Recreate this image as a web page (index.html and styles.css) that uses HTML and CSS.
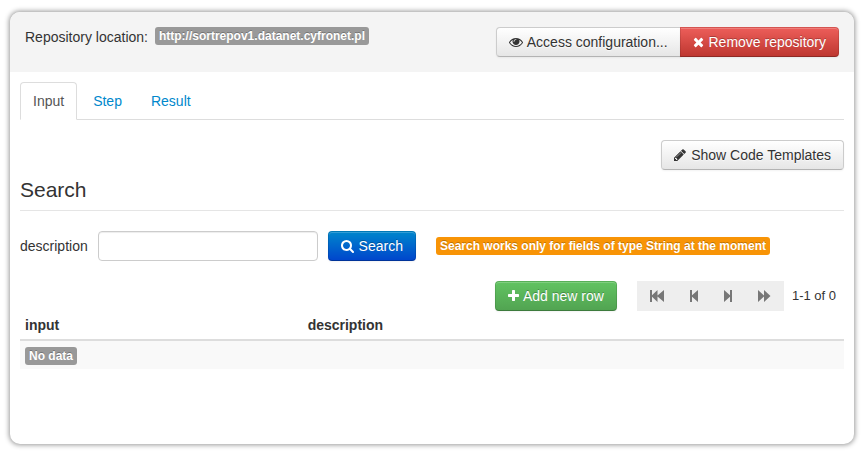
FILE: index.html
```html
<!DOCTYPE html>
<html lang="en">
<head>
<meta charset="utf-8">
<title>Repository</title>
<link rel="stylesheet" href="styles.css">
</head>
<body>
<main class="panel">
  <header class="panel-header">
    <div class="location">Repository location: <span class="label">http://sortrepov1.datanet.cyfronet.pl</span></div>
    <div class="btn-group">
      <button type="button" class="btn"><svg class="icon" width="14" height="14" viewBox="0 0 1792 1792" aria-hidden="true"><path d="M1664 960q-152-236-381-353 61 104 61 225 0 185-131.5 316.5t-316.5 131.5-316.5-131.5-131.5-316.5q0-121 61-225-229 117-381 353 133 205 333.5 326.5t434.5 121.5 434.5-121.5 333.5-326.5zm-720-384q0-20-14-34t-34-14q-125 0-214.5 89.5t-89.5 214.5q0 20 14 34t34 14 34-14 14-34q0-86 61-147t147-61q20 0 34-14t14-34zm848 384q0 34-20 69-140 230-376.5 368.5t-499.5 138.5-499.5-139-376.5-368q-20-35-20-69t20-69q140-229 376.5-368t499.5-139 499.5 139 376.5 368q20 35 20 69z"/></svg> Access configuration...</button>
      <button type="button" class="btn btn-danger"><svg class="icon" width="11" height="14" viewBox="192 0 1408 1792" aria-hidden="true"><path d="M1490 1322q0 40-28 68l-136 136q-28 28-68 28t-68-28l-294-294-294 294q-28 28-68 28t-68-28l-136-136q-28-28-28-68t28-68l294-294-294-294q-28-28-28-68t28-68l136-136q28-28 68-28t68 28l294 294 294-294q28-28 68-28t68 28l136 136q28 28 28 68t-28 68l-294 294 294 294q28 28 28 68z"/></svg> Remove repository</button>
    </div>
  </header>

  <div class="panel-body">
    <nav class="tabs">
      <a class="tab active" href="#input">Input</a>
      <a class="tab" href="#step">Step</a>
      <a class="tab" href="#result">Result</a>
    </nav>

    <div class="actions">
      <button type="button" class="btn"><svg class="icon" width="12" height="14" viewBox="128 0 1536 1792" aria-hidden="true"><path d="M491 1536l91-91-235-235-91 91v107h128v128h107zm523-928q0-22-22-22-10 0-17 7l-542 542q-7 7-7 17 0 22 22 22 10 0 17-7l542-542q7-7 7-17zm-54-192l416 416-832 832h-416v-416zm683 96q0 53-37 90l-166 166-416-416 166-165q36-38 90-38 53 0 91 38l235 234q37 39 37 91z"/></svg> Show Code Templates</button>
    </div>

    <h2 class="heading">Search</h2>

    <form class="search-form">
      <label for="description">description</label>
      <input type="text" id="description">
      <button type="button" class="btn btn-primary"><svg class="icon" width="13" height="14" viewBox="64 0 1664 1792" aria-hidden="true"><path d="M1216 832q0-185-131.5-316.5t-316.5-131.5-316.5 131.5-131.5 316.5 131.5 316.5 316.5 131.5 316.5-131.5 131.5-316.5zm512 832q0 52-38 90t-90 38q-54 0-90-38l-343-342q-179 124-399 124-143 0-273.5-55.5t-225-150-150-225-55.5-273.5 55.5-273.5 150-225 225-150 273.5-55.5 273.5 55.5 225 150 150 225 55.5 273.5q0 220-124 399l343 343q37 37 37 90z"/></svg> Search</button>
      <span class="label label-warning">Search works only for fields of type String at the moment</span>
    </form>

    <div class="toolbar">
      <button type="button" class="btn btn-success"><svg class="icon" width="11" height="14" viewBox="192 0 1408 1792" aria-hidden="true"><path d="M1600 736v192q0 40-28 68t-68 28h-416v416q0 40-28 68t-68 28h-192q-40 0-68-28t-28-68v-416h-416q-40 0-68-28t-28-68v-192q0-40 28-68t68-28h416v-416q0-40 28-68t68-28h192q40 0 68 28t28 68v416h416q40 0 68 28t28 68z"/></svg> Add new row</button>
      <div class="pager">
        <button type="button" aria-label="First page"><svg width="14" height="12" viewBox="0 0 14 12"><path d="M0 0h2v5.300L7.500 0v5.500L14 0v12L7.500 6.500V12L2 6.700V12H0z"/></svg></button>
        <button type="button" aria-label="Previous page"><svg width="8" height="12" viewBox="0 0 8 12"><path d="M0 0h2v5.300L8 0v12L2 6.700V12H0z"/></svg></button>
        <button type="button" aria-label="Next page"><svg width="8" height="12" viewBox="0 0 8 12"><path d="M8 0H6v5.300L0 0v12l6-5.300V12h2z"/></svg></button>
        <button type="button" aria-label="Last page"><svg width="13" height="12" viewBox="0 0 13 12"><path d="M0 0l6 5.500V0l6.500 6-6.500 6V6.500L0 12z"/></svg></button>
      </div>
      <span class="range">1-1 of 0</span>
    </div>

    <table class="data">
      <thead>
        <tr><th class="col-input" scope="col">input</th><th scope="col">description</th></tr>
      </thead>
      <tbody>
        <tr><td colspan="2"><span class="label">No data</span></td></tr>
      </tbody>
    </table>
  </div>
</main>
</body>
</html>
```
FILE: styles.css
```css
* {
  box-sizing: border-box;
}

body {
  margin: 0;
  padding: 12px 11px 12px 10px;
  min-height: 100vh;
  display: flex;
  background: #fff;
  color: #333;
  font: 14px/20px "Liberation Sans", Arial, sans-serif;
}

.panel {
  flex: 1;
  min-width: 0;
  border-radius: 10px;
  background: #fff;
  box-shadow: 0 0 5px 1px #999;
  overflow: hidden;
}

.panel-header {
  display: flex;
  justify-content: space-between;
  align-items: flex-start;
  padding: 15px;
  background: #f4f4f4;
}

.location {
  display: flex;
  gap: 7px;
}

.panel-body {
  padding: 10px;
}

.label {
  display: inline-block;
  height: 18px;
  padding: 2px 4px;
  border-radius: 3px;
  background: #999;
  color: #fff;
  font-size: 12px;
  font-weight: bold;
  line-height: 14px;
  white-space: nowrap;
  text-shadow: 0 -1px 0 rgba(0, 0, 0, 0.25);
}

.label-warning {
  margin-left: 10px;
  background: #f89406;
}

.btn {
  height: 30px;
  padding: 4px 12px;
  border: 1px solid #ccc;
  border-color: #ccc #ccc #b3b3b3;
  border-radius: 4px;
  background: linear-gradient(#fff, #e6e6e6) padding-box;
  box-shadow: inset 0 1px 0 rgba(255, 255, 255, 0.2), 0 1px 2px rgba(0, 0, 0, 0.05);
  color: #333;
  font: inherit;
  white-space: nowrap;
  text-shadow: 0 1px 1px rgba(255, 255, 255, 0.75);
}

.btn-danger,
.btn-primary,
.btn-success {
  border-color: rgba(0, 0, 0, 0.1) rgba(0, 0, 0, 0.1) rgba(0, 0, 0, 0.25);
  color: #fff;
  text-shadow: 0 -1px 0 rgba(0, 0, 0, 0.25);
}

.btn-danger {
  background: linear-gradient(#ee5f5b, #bd362f) border-box;
}

.btn-primary {
  background: linear-gradient(#0088cc, #0044cc) border-box;
}

.btn-success {
  background: linear-gradient(#62c462, #51a351) border-box;
}

.btn-group {
  display: flex;
}

.btn-group .btn:first-child {
  border-radius: 4px 0 0 4px;
}

.btn-group .btn:last-child {
  margin-left: -1px;
  border-radius: 0 4px 4px 0;
}

.icon {
  margin-right: 1px;
  fill: currentColor;
  vertical-align: -2px;
}

.tabs {
  display: flex;
  gap: 3px;
  border-bottom: 1px solid #ddd;
}

.tab {
  margin-bottom: -1px;
  padding: 8px 12px;
  border: 1px solid transparent;
  border-radius: 4px 4px 0 0;
  color: #0088cc;
  text-decoration: none;
}

.tab.active {
  border-color: #ddd #ddd #fff;
  background: #fff;
  color: #555;
}

.actions {
  display: flex;
  justify-content: flex-end;
  margin-top: 20px;
}

.heading {
  margin: 0 0 20px;
  border-bottom: 1px solid #e5e5e5;
  font-size: 21px;
  font-weight: normal;
  line-height: 40px;
}

.search-form {
  display: flex;
  align-items: center;
  gap: 10px;
}

.search-form input {
  width: 220px;
  height: 30px;
  padding: 4px 6px;
  border: 1px solid #ccc;
  border-radius: 4px;
  background: #fff;
  box-shadow: inset 0 1px 1px rgba(0, 0, 0, 0.075);
  color: #555;
  font: inherit;
}

.toolbar {
  display: flex;
  justify-content: flex-end;
  align-items: center;
  margin-top: 20px;
}

.pager {
  display: flex;
  margin-left: 20px;
  background: #eee;
}

.pager button {
  display: flex;
  align-items: center;
  height: 30px;
  padding: 0 13px;
  border: 0;
  background: none;
}

.pager svg {
  fill: #777;
}

.range {
  padding: 0 8px;
  font-size: 13px;
}

.data {
  width: 100%;
  border-collapse: separate;
  border-spacing: 0;
}

.data th {
  padding: 4px 5px;
  border-bottom: 2px solid #ddd;
  text-align: left;
}

.col-input {
  width: 34.3%;
}

.data td {
  height: 28px;
  padding: 4px 5px;
  background: #f9f9f9;
}

.data td .label {
  vertical-align: middle;
}
```
